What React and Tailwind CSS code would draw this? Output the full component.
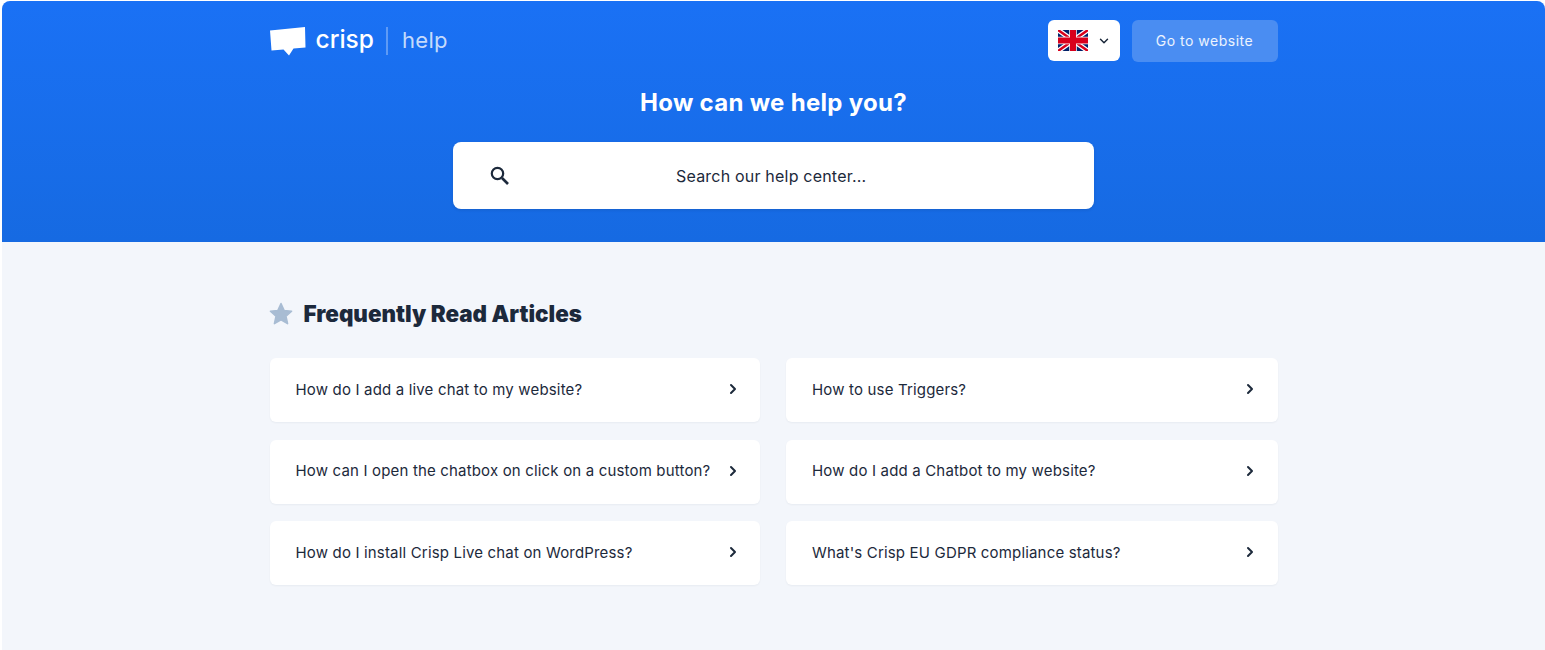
import React from "react";
import { ChevronRight, ChevronDown } from "lucide-react";

const articles = [
  ["How do I add a live chat to my website?", "How to use Triggers?"],
  ["How can I open the chatbox on click on a custom button?", "How do I add a Chatbot to my website?"],
  ["How do I install Crisp Live chat on WordPress?", "What's Crisp EU GDPR compliance status?"],
];

const Flag = () => (
  <svg width="30" height="21" viewBox="0 0 60 42">
    <rect width="60" height="42" fill="#012169" />
    <path d="M0 0L60 42M60 0L0 42" stroke="#fff" strokeWidth="10" />
    <path d="M0 0L60 42M60 0L0 42" stroke="#d8001c" strokeWidth="5" />
    <path d="M30 0V42M0 21H60" stroke="#fff" strokeWidth="15" />
    <path d="M30 0V42M0 21H60" stroke="#d8001c" strokeWidth="12" />
  </svg>
);

const Logo = () => (
  <svg width="36" height="29" viewBox="0 0 36 29" className="mt-px">
    <path d="M0 3.5L35 0L35.5 20.5L23.5 21.5L19 28.5L13.5 22.5L1.5 23.5Z" fill="#fff" />
  </svg>
);

const SearchIcon = () => (
  <svg width="20" height="20" viewBox="0 0 20 20" fill="none" stroke="#1c293b" strokeWidth="2.2">
    <circle cx="7.5" cy="7.5" r="5.7" />
    <path d="M12 12L18 18" strokeWidth="2.6" />
  </svg>
);

const Star = () => (
  <svg width="24" height="24" viewBox="0 0 24 24" fill="#a8bcd3" stroke="#a8bcd3" strokeWidth="1.5" strokeLinejoin="round">
    <path d="M12 1.5L15.1 8.4L22.6 9.2L17 14.2L18.6 21.7L12 17.9L5.4 21.7L7 14.2L1.4 9.2L8.9 8.4Z" />
  </svg>
);

const Card = ({ title }) => (
  <div className="flex h-16 items-center justify-between rounded-md bg-white pl-[26px] pr-[19.5px] shadow-[0_1px_2px_rgba(28,41,59,0.05)]">
    <span className="text-[15px] tracking-[0.17px] text-[#1c293b]">{title}</span>
    <ChevronRight size={16} strokeWidth={3} className="mb-[2px] text-[#1c293b]" />
  </div>
);

export default function App() {
  return (
    <div className="h-[650px] bg-white pl-[2px] pt-px font-['Inter',sans-serif]">
      <div className="h-[649px] overflow-hidden rounded-t-lg bg-[#f3f6fb]">
        <header className="h-[241px] bg-gradient-to-b from-[#1a71f5] to-[#166ae2]">
          <div className="mx-auto w-[1008px]">
            <div className="flex items-start justify-between pt-[19px]">
              <div className="flex items-center pt-[6px]">
                <Logo />
                <span className="ml-[10px] pb-[3px] text-[24.5px] font-medium leading-none text-white">crisp</span>
                <span className="ml-[12px] h-[28px] w-[2px] bg-white/30" />
                <span className="ml-[14px] pb-[3px] text-[22px] leading-none tracking-[0.3px] text-white/75">help</span>
              </div>
              <div className="flex items-start gap-3">
                <div className="flex h-[41px] w-[72px] items-center gap-[9px] rounded-md bg-white pl-[10px]">
                  <Flag />
                  <ChevronDown size={14} strokeWidth={2.5} className="text-[#1c293b]" />
                </div>
                <div className="flex h-[42px] w-[146px] items-center justify-center rounded-md bg-[#4a8df2] text-sm tracking-[0.5px] text-white/90">
                  Go to website
                </div>
              </div>
            </div>
            <h1 className="mt-[25px] text-center text-2xl font-bold leading-[32px] tracking-[0.3px] text-white">How can we help you?</h1>
            <div className="mx-auto mt-[23px] flex h-[67px] w-[641px] items-center rounded-lg bg-white pl-[37px] shadow-[0_1px_3px_rgba(28,41,59,0.15)]">
              <SearchIcon />
              <span className="ml-[166px] text-base tracking-[0.2px] text-[#1c293b]">Search our help center...</span>
            </div>
          </div>
        </header>
        <main className="mx-auto w-[1008px] pt-[57px]">
          <div className="flex items-center gap-[11px]">
            <span className="-ml-px flex">
              <Star />
            </span>
            <h2 className="text-[22.4px] font-black leading-[30px] text-[#1c293b]">Frequently Read Articles</h2>
          </div>
          <div className="mt-[29px] grid grid-cols-[490.5px_491.5px] gap-x-[26px] gap-y-[17.5px]">
            {articles.flat().map((title) => (
              <Card key={title} title={title} />
            ))}
          </div>
        </main>
      </div>
    </div>
  );
}
